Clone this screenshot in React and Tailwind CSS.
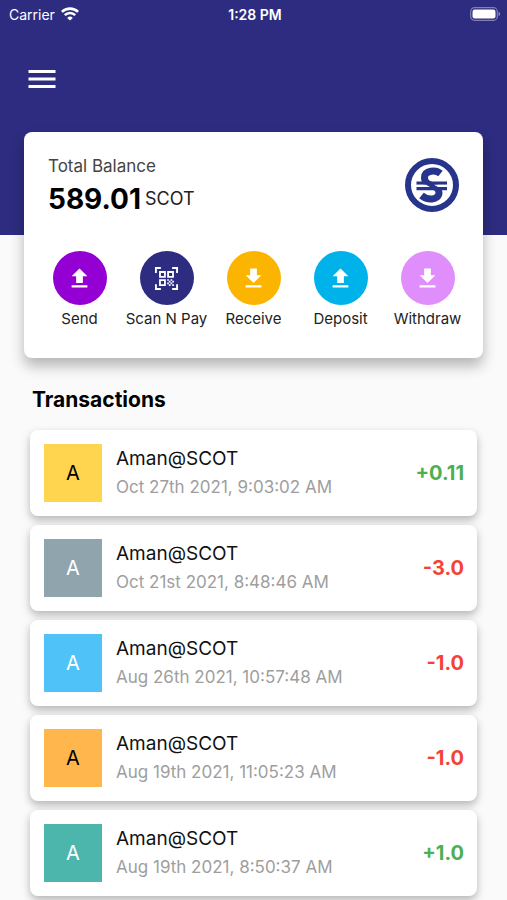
import clsx from 'clsx';
import { MdDownload, MdMenu, MdUpload } from 'react-icons/md';

const actions = [
  { label: 'Send', icon: MdUpload, color: 'bg-[#9400d3]' },
  { label: 'Scan N Pay', icon: QrScanIcon, color: 'bg-[#2d2c80]' },
  { label: 'Receive', icon: MdDownload, color: 'bg-[#fbb500]' },
  { label: 'Deposit', icon: MdUpload, color: 'bg-[#00b2ea]' },
  { label: 'Withdraw', icon: MdDownload, color: 'bg-[#df8efb]' },
];

const transactions = [
  { name: 'Aman@SCOT', date: 'Oct 27th 2021, 9:03:02 AM', amount: '+0.11', avatar: 'bg-[#ffd54f] text-black' },
  { name: 'Aman@SCOT', date: 'Oct 21st 2021, 8:48:46 AM', amount: '-3.0', avatar: 'bg-[#90a4ae] text-white' },
  { name: 'Aman@SCOT', date: 'Aug 26th 2021, 10:57:48 AM', amount: '-1.0', avatar: 'bg-[#4fc3f7] text-white' },
  { name: 'Aman@SCOT', date: 'Aug 19th 2021, 11:05:23 AM', amount: '-1.0', avatar: 'bg-[#ffb74d] text-black' },
  { name: 'Aman@SCOT', date: 'Aug 19th 2021, 8:50:37 AM', amount: '+1.0', avatar: 'bg-[#4db6ac] text-white' },
];

function QrScanIcon({ className }) {
  return (
    <svg viewBox="0 0 24 24" className={className} fill="none" stroke="currentColor" aria-hidden="true">
      <path d="M2.600 7V2.600H7M17 2.600h4.400V7M2.600 17v4.400H7M17 21.400h4.400V17" strokeWidth="1.700" />
      <path d="M6.200 6.200h4.400v4.400H6.200zM13.400 6.200h4.400v4.400h-4.400zM6.200 13.400h4.400v4.400H6.200z" strokeWidth="1.600" />
      <path
        d="M12.600 12.600h1.500v1.500h-1.500zM15.600 12.600h1.500v1.500h-1.500zM14.100 14.100h1.500v1.500h-1.500zM17.100 14.100h1.500v1.500h-1.500zM12.600 15.600h1.500v1.500h-1.500zM15.600 15.600h1.500v1.500h-1.500zM14.100 17.100h1.500v1.500h-1.500zM17.100 17.100h1.500v1.500h-1.500z"
        fill="currentColor"
        stroke="none"
      />
    </svg>
  );
}

function WifiIcon() {
  return (
    <svg viewBox="0 0 18 14" className="h-[14px] w-[18px]" fill="none" stroke="currentColor" strokeWidth="2.6" aria-hidden="true">
      <path d="M0.9 4.9a11.6 11.6 0 0 1 16.2 0" />
      <path d="M3.8 8.2a7.4 7.4 0 0 1 10.4 0" />
      <path d="M9 13.6 6.2 10.9a4 4 0 0 1 5.6 0z" fill="currentColor" stroke="none" />
    </svg>
  );
}

function BatteryIcon() {
  return (
    <svg viewBox="0 0 31 14" className="h-[14px] w-[31px]" aria-hidden="true">
      <rect x="0.7" y="0.7" width="26.6" height="12.6" rx="3.8" fill="none" stroke="#fff" strokeOpacity="0.4" strokeWidth="1.2" />
      <rect x="2.5" y="2.5" width="23" height="9" rx="2.2" fill="#fff" />
      <path d="M28.6 4.8c2 .8 2 3.6 0 4.4z" fill="#fff" fillOpacity="0.5" />
    </svg>
  );
}

function ScotLogo() {
  return (
    <svg viewBox="0 0 54 54" className="size-[54px]" role="img" aria-label="SCOT">
      <circle cx="27" cy="27" r="24" fill="#fff" stroke="#27348b" strokeWidth="6" />
      <path
        d="M35.5 15.5C32 12.6 28 12.8 26 13.2C21.5 14 19.5 16.5 19.5 19.5C19.5 24.5 23 26 27 27.5C31 29 34 30.5 34 34.5C34 38.5 31 40.6 27 41C22.5 41.4 19.5 40 16.5 37.5"
        fill="none"
        stroke="#27348b"
        strokeWidth="7"
      />
      <path d="M11.5 23.5H42v3.2H11.5zM11.5 29H42v3.2H11.5z" fill="#27348b" />
      <path d="M11.5 26.7H21L25 29H11.5zM42 26.7H29L33 29h9z" fill="#fff" />
    </svg>
  );
}

function StatusBar() {
  return (
    <div className="grid h-7 grid-cols-3 items-center pr-[6px] pl-[9px] text-[14px]">
      <div className="flex items-center gap-[6px]">
        <span>Carrier</span>
        <WifiIcon />
      </div>
      <span className="text-center font-semibold">1:28 PM</span>
      <div className="flex justify-end">
        <BatteryIcon />
      </div>
    </div>
  );
}

function ActionButton({ label, icon: Icon, color }) {
  return (
    <button type="button" className="flex flex-col items-center gap-1 text-[15px] leading-5 whitespace-nowrap text-[#222]">
      <span className={clsx('flex size-[54px] items-center justify-center rounded-full text-white', color)}>
        <Icon className="size-[27px]" />
      </span>
      {label}
    </button>
  );
}

function BalanceCard() {
  return (
    <section className="relative mx-6 -mt-[103px] rounded-lg bg-white px-3 pt-6 pb-[29px] shadow-[0_8px_14px_rgba(0,0,0,0.28)]">
      <div className="flex items-start justify-between px-3">
        <div>
          <p className="text-[17px] leading-5 text-[#444]">Total Balance</p>
          <p className="mt-[5px] flex items-center gap-1 leading-9">
            <span className="text-[28px] font-bold text-black">589.01</span>
            <span className="text-[18px] text-[#222]">SCOT</span>
          </p>
        </div>
        <div className="pt-[2px]">
          <ScotLogo />
        </div>
      </div>
      <div className="mt-[34px] grid grid-cols-5">
        {actions.map((action) => (
          <ActionButton key={action.label} {...action} />
        ))}
      </div>
    </section>
  );
}

function TransactionRow({ name, date, amount, avatar }) {
  return (
    <li className="flex items-center rounded-lg bg-white py-[14px] pr-[13px] pl-[14px] shadow-[0_4px_8px_rgba(0,0,0,0.28)]">
      <span className={clsx('flex size-[58px] shrink-0 items-center justify-center text-[20px]', avatar)}>
        {name[0]}
      </span>
      <div className="ml-[14px] min-w-0 flex-1">
        <p className="text-[19px] leading-7 text-[#111]">{name}</p>
        <p className="text-[17px] leading-7 text-[#9e9e9e]">{date}</p>
      </div>
      <span className={clsx('text-[20px] font-bold', amount.startsWith('+') ? 'text-[#4caf50]' : 'text-[#f44336]')}>
        {amount}
      </span>
    </li>
  );
}

export default function App() {
  return (
    <div className="min-h-screen bg-[#fafafa] font-['Inter',sans-serif]">
      <header className="h-[235px] bg-[#2d2c80] text-white">
        <StatusBar />
        <button type="button" aria-label="Menu" className="mt-[33px] ml-6 block">
          <MdMenu className="size-9" />
        </button>
      </header>
      <main>
        <BalanceCard />
        <h2 className="mt-7 ml-8 text-[21px] leading-7 font-bold text-black">Transactions</h2>
        <ul className="mt-4 flex flex-col gap-[9px] px-[30px] pb-3">
          {transactions.map((tx) => (
            <TransactionRow key={tx.date} {...tx} />
          ))}
        </ul>
      </main>
    </div>
  );
}
